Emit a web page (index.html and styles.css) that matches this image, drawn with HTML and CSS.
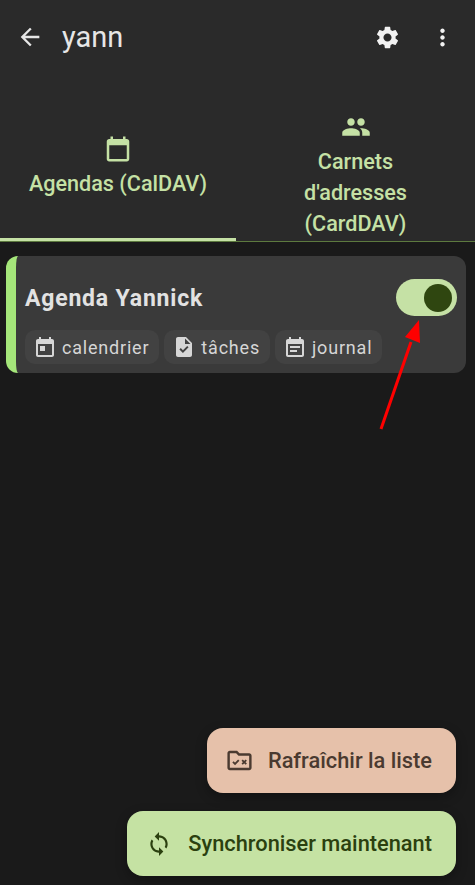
FILE: index.html
```html
<!DOCTYPE html>
<html lang="fr">
<head>
    <meta charset="UTF-8">
    <meta name="viewport" content="width=device-width, initial-scale=1.0">
    <title>yann</title>
    <link rel="stylesheet" href="styles.css">
</head>
<body>
    <div class="screen">
        <header class="top-panel">
            <div class="app-bar">
                <svg class="icon back-icon" viewBox="0 0 24 24"><path d="M20 11H7.83l5.59-5.59L12 4l-8 8 8 8 1.41-1.41L7.83 13H20v-2z"/></svg>
                <h1 class="title">yann</h1>
                <svg class="icon gear-icon" viewBox="0 0 24 24"><path d="M19.14 12.94c.04-.3.06-.61.06-.94 0-.32-.02-.64-.07-.94l2.03-1.58c.18-.14.23-.41.12-.61l-1.92-3.32c-.12-.22-.37-.29-.59-.22l-2.39.96c-.5-.38-1.03-.7-1.62-.94l-.36-2.54c-.04-.24-.24-.41-.48-.41h-3.84c-.24 0-.43.17-.47.41l-.36 2.54c-.59.24-1.13.57-1.62.94l-2.39-.96c-.22-.08-.47 0-.59.22L2.74 8.87c-.12.21-.08.47.12.61l2.03 1.58c-.05.3-.09.63-.09.94s.02.64.07.94l-2.03 1.58c-.18.14-.23.41-.12.61l1.92 3.32c.12.22.37.29.59.22l2.39-.96c.5.38 1.03.7 1.62.94l.36 2.54c.05.24.24.41.48.41h3.84c.24 0 .44-.17.47-.41l.36-2.54c.59-.24 1.13-.56 1.62-.94l2.39.96c.22.08.47 0 .59-.22l1.92-3.32c.12-.22.07-.47-.12-.61l-2.01-1.58zM12 15.6c-1.98 0-3.6-1.62-3.6-3.6s1.62-3.6 3.6-3.6 3.6 1.62 3.6 3.6-1.62 3.6-3.6 3.6z"/></svg>
                <svg class="icon more-icon" viewBox="0 0 24 24"><path d="M12 8c1.1 0 2-.9 2-2s-.9-2-2-2-2 .9-2 2 .9 2 2 2zm0 2c-1.1 0-2 .9-2 2s.9 2 2 2 2-.9 2-2-.9-2-2-2zm0 6c-1.1 0-2 .9-2 2s.9 2 2 2 2-.9 2-2-.9-2-2-2z"/></svg>
            </div>
            <nav class="tabs">
                <div class="tab tab-active">
                    <svg class="icon tab-icon" viewBox="0 0 24 24"><path d="M19 4h-1V2h-2v2H8V2H6v2H5c-1.11 0-2 .9-2 2v14c0 1.1.89 2 2 2h14c1.1 0 2-.9 2-2V6c0-1.1-.9-2-2-2zm0 16H5V9h14v11z"/></svg>
                    <span>Agendas (CalDAV)</span>
                </div>
                <div class="tab tab-tall">
                    <svg class="icon tab-icon" viewBox="0 0 24 24"><path d="M16 11c1.66 0 2.99-1.34 2.99-3S17.66 5 16 5c-1.66 0-3 1.34-3 3s1.34 3 3 3zm-8 0c1.66 0 2.99-1.34 2.99-3S9.66 5 8 5C6.34 5 5 6.34 5 8s1.34 3 3 3zm0 2c-2.33 0-7 1.17-7 3.5V19h14v-2.5c0-2.33-4.67-3.5-7-3.5zm8 0c-.29 0-.62.02-.97.05 1.16.84 1.97 1.97 1.97 3.45V19h6v-2.5c0-2.33-4.67-3.5-7-3.5z"/></svg>
                    <span>Carnets<br>d'adresses<br>(CardDAV)</span>
                </div>
            </nav>
        </header>

        <main class="list">
            <section class="card">
                <div class="card-head">
                    <h2 class="card-title">Agenda Yannick</h2>
                    <div class="switch"><div class="thumb"></div></div>
                </div>
                <div class="chips">
                    <div class="chip">
                        <svg class="icon chip-icon" viewBox="0 0 24 24"><path d="M19 4h-1V2h-2v2H8V2H6v2H5c-1.11 0-2 .9-2 2v14c0 1.1.89 2 2 2h14c1.1 0 2-.9 2-2V6c0-1.1-.9-2-2-2zm0 16H5V9h14v11zM7 11h5v5H7z"/></svg>
                        <span>calendrier</span>
                    </div>
                    <div class="chip">
                        <svg class="icon chip-icon" viewBox="0 0 24 24"><path d="M14 2H6c-1.1 0-1.99.9-1.99 2L4 20c0 1.1.89 2 1.99 2H18c1.1 0 2-.9 2-2V8l-6-6zm-3.06 16L7.4 14.46l1.41-1.41 2.12 2.12 4.24-4.24 1.41 1.41L10.94 18zM13 9V3.5L18.5 9H13z"/></svg>
                        <span>tâches</span>
                    </div>
                    <div class="chip">
                        <svg class="icon chip-icon" viewBox="0 0 24 24"><path d="M17 11H7v2h10v-2zm2-7h-1V2h-2v2H8V2H6v2H5c-1.11 0-1.99.9-1.99 2L3 20c0 1.1.89 2 2 2h14c1.1 0 2-.9 2-2V6c0-1.1-.9-2-2-2zm0 16H5V9h14v11zm-5-5H7v2h7v-2z"/></svg>
                        <span>journal</span>
                    </div>
                </div>
            </section>
        </main>

        <div class="actions">
            <button class="fab fab-peach">
                <svg class="icon fab-icon folder-icon" viewBox="0 0 24 24"><path d="M20 6h-8l-2-2H4c-1.1 0-1.99.9-1.99 2L2 18c0 1.1.9 2 2 2h16c1.1 0 2-.9 2-2V8c0-1.1-.9-2-2-2zm0 12H4V6h5.17l2 2H20v10z"/><path d="M6.6 13.2l1.7 1.7 3.1-3.2" class="mark"/><path d="M14.2 11.6l3.4 3.4m0-3.4l-3.4 3.4" class="mark"/></svg>
                <span>Rafraîchir la liste</span>
            </button>
            <button class="fab fab-green">
                <svg class="icon fab-icon sync-icon" viewBox="0 0 24 24"><path d="M12 4V1L8 5l4 4V6c3.31 0 6 2.69 6 6 0 1.01-.25 1.97-.7 2.8l1.46 1.46C19.54 15.03 20 13.57 20 12c0-4.42-3.58-8-8-8zm0 14c-3.31 0-6-2.69-6-6 0-1.01.25-1.97.7-2.8L5.24 7.74C4.46 8.97 4 10.43 4 12c0 4.42 3.58 8 8 8v3l4-4-4-4v3z"/></svg>
                <span>Synchroniser maintenant</span>
            </button>
        </div>

        <!-- annotation drawn on top of the screenshot -->
        <svg class="arrow" viewBox="0 0 475 885">
            <line x1="381" y1="429" x2="411" y2="342" stroke="#ff0000" stroke-width="3"/>
            <polygon points="419,320 405,337 420,343" fill="#ff0000"/>
        </svg>
    </div>
</body>
</html>
```

FILE: styles.css
```css
* {
    margin: 0;
    padding: 0;
    box-sizing: border-box;
}

body {
    font-family: Roboto, "Noto Sans", sans-serif;
    background: #1a1a1a;
    overflow: hidden;
}

.screen {
    position: relative;
    width: 475px;
    height: 885px;
    background: #1a1a1a;
}

.icon {
    display: block;
    fill: currentColor;
    flex-shrink: 0;
}

.top-panel {
    background: #2a2a2a;
    height: 242px;
    display: flex;
    flex-direction: column;
}

.app-bar {
    height: 74px;
    flex-shrink: 0;
    display: flex;
    align-items: center;
    padding-left: 16px;
    color: #e6e6e6;
}

.back-icon {
    width: 28px;
    height: 28px;
}

.title {
    font-size: 29px;
    font-weight: 400;
    margin-left: 18px;
    flex: 1;
}

.gear-icon {
    width: 27px;
    height: 27px;
    color: #f2f2f2;
}

.more-icon {
    width: 27px;
    height: 27px;
    margin: 0 19px 0 28px;
    color: #f2f2f2;
}

.tabs {
    flex: 1;
    display: flex;
    border-bottom: 1px solid #5d7a3f;
}

.tab {
    flex: 1;
    display: flex;
    flex-direction: column;
    align-items: center;
    justify-content: center;
    padding-top: 17px;
    color: #c5e1a5;
    font-size: 21.6px;
    font-weight: 500;
    line-height: 31px;
    text-align: center;
}

.tab-active {
    flex: 0 0 236px;
    box-shadow: inset 0 -3px 0 #c5e1a5;
}

.tab-tall {
    padding-top: 35px;
}

.tab-icon {
    width: 30px;
    height: 30px;
    margin-bottom: 4px;
}

.list {
    padding: 14px 9px 0 6px;
}

.card {
    background: #3a3a3a;
    border-left: 10px solid #a5e67a;
    border-radius: 12px;
    height: 117px;
    padding: 23px 9px 9px 9px;
}

.card-head {
    display: flex;
    align-items: center;
    justify-content: space-between;
    height: 37px;
}

.card-title {
    font-size: 23px;
    font-weight: 700;
    letter-spacing: 0.8px;
    color: #e2e2e2;
    padding-top: 2px;
}

.switch {
    width: 61px;
    height: 37px;
    border-radius: 19px;
    background: #c5e1a5;
    display: flex;
    align-items: center;
    justify-content: flex-end;
    padding-right: 5px;
}

.thumb {
    width: 28px;
    height: 28px;
    border-radius: 50%;
    background: #2f4610;
}

.chips {
    display: flex;
    gap: 5px;
    margin-top: 14px;
}

.chip {
    height: 34px;
    padding: 0 10px 0 8px;
    display: flex;
    align-items: center;
    gap: 5px;
    border-radius: 10px;
    background: #424242;
    color: #d6d6d6;
    font-size: 18px;
    letter-spacing: 0.8px;
}

.chip-icon {
    width: 24px;
    height: 24px;
}

.actions {
    position: absolute;
    right: 19px;
    bottom: 9px;
    display: flex;
    flex-direction: column;
    align-items: flex-end;
    gap: 18px;
}

.fab {
    height: 65px;
    display: flex;
    align-items: center;
    gap: 13px;
    border: none;
    border-radius: 16px;
    padding: 0 24px 0 18px;
    font-family: inherit;
    font-size: 21.8px;
    font-weight: 500;
    box-shadow: 0 4px 12px rgba(0, 0, 0, 0.3);
}

.fab-peach {
    background: #e6c1aa;
    color: #4a3a30;
}

.fab-green {
    background: #c5e2a3;
    color: #2b400f;
}

.folder-icon {
    width: 29px;
    height: 29px;
    margin-right: 1px;
}

.sync-icon {
    width: 26px;
    height: 26px;
    margin: 0 3px 0 1px;
}

.mark {
    fill: none;
    stroke: currentColor;
    stroke-width: 1.5;
}

.arrow {
    position: absolute;
    top: 0;
    left: 0;
    width: 475px;
    height: 885px;
    pointer-events: none;
}
```
